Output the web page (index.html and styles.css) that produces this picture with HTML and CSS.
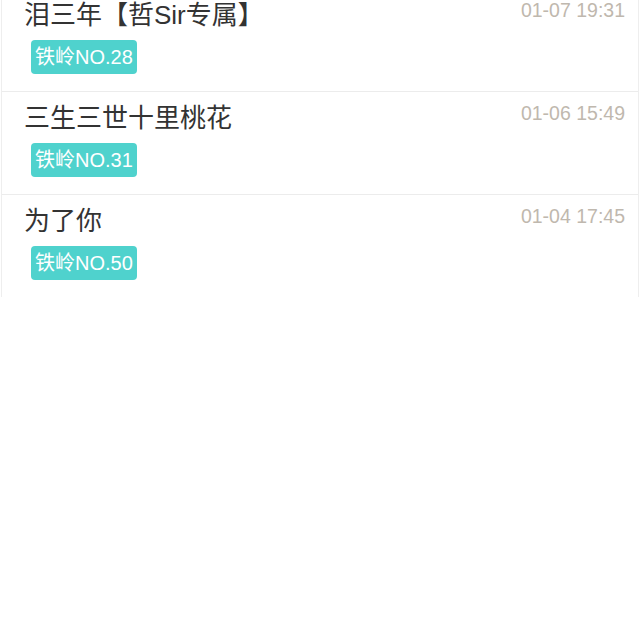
FILE: index.html
```html
<!DOCTYPE html>
<html lang="zh">
<head>
<meta charset="utf-8">
<link rel="stylesheet" href="styles.css">
</head>
<body>
<div class="list">
  <div class="row">
    <div class="head">
      <div class="title">泪三年【哲Sir专属】</div>
      <div class="time">01-07 19:31</div>
    </div>
    <span class="tag">铁岭NO.28</span>
  </div>
  <div class="row">
    <div class="head">
      <div class="title">三生三世十里桃花</div>
      <div class="time">01-06 15:49</div>
    </div>
    <span class="tag">铁岭NO.31</span>
  </div>
  <div class="row">
    <div class="head">
      <div class="title">为了你</div>
      <div class="time">01-04 17:45</div>
    </div>
    <span class="tag">铁岭NO.50</span>
  </div>
</div>
</body>
</html>
```
FILE: styles.css
```css
html, body {
  margin: 0;
  padding: 0;
  background: #fff;
}
body {
  font-family: "Liberation Sans", "Noto Sans CJK SC", sans-serif;
}
.list {
  margin: -11px 1px 0 1px;
  border-left: 1px solid #eeeeee;
  border-right: 1px solid #eeeeee;
}
.row {
  padding: 10px 13px 17px 22px;
  border-bottom: 1px solid #ececec;
  display: flex;
  flex-direction: column;
  align-items: flex-start;
}
.row:last-child {
  border-bottom: none;
}
.head {
  display: flex;
  justify-content: space-between;
  align-items: flex-start;
  width: 100%;
}
.title {
  font-size: 26px;
  line-height: 32px;
  color: #333333;
}
.time {
  font-size: 19.5px;
  line-height: 22px;
  color: #bfb8ae;
}
.tag {
  margin-top: 9px;
  margin-left: 7px;
  background: #4fd2cd;
  color: #ffffff;
  font-size: 20px;
  line-height: 24px;
  padding: 5px 4px;
  border-radius: 4px;
}
```
